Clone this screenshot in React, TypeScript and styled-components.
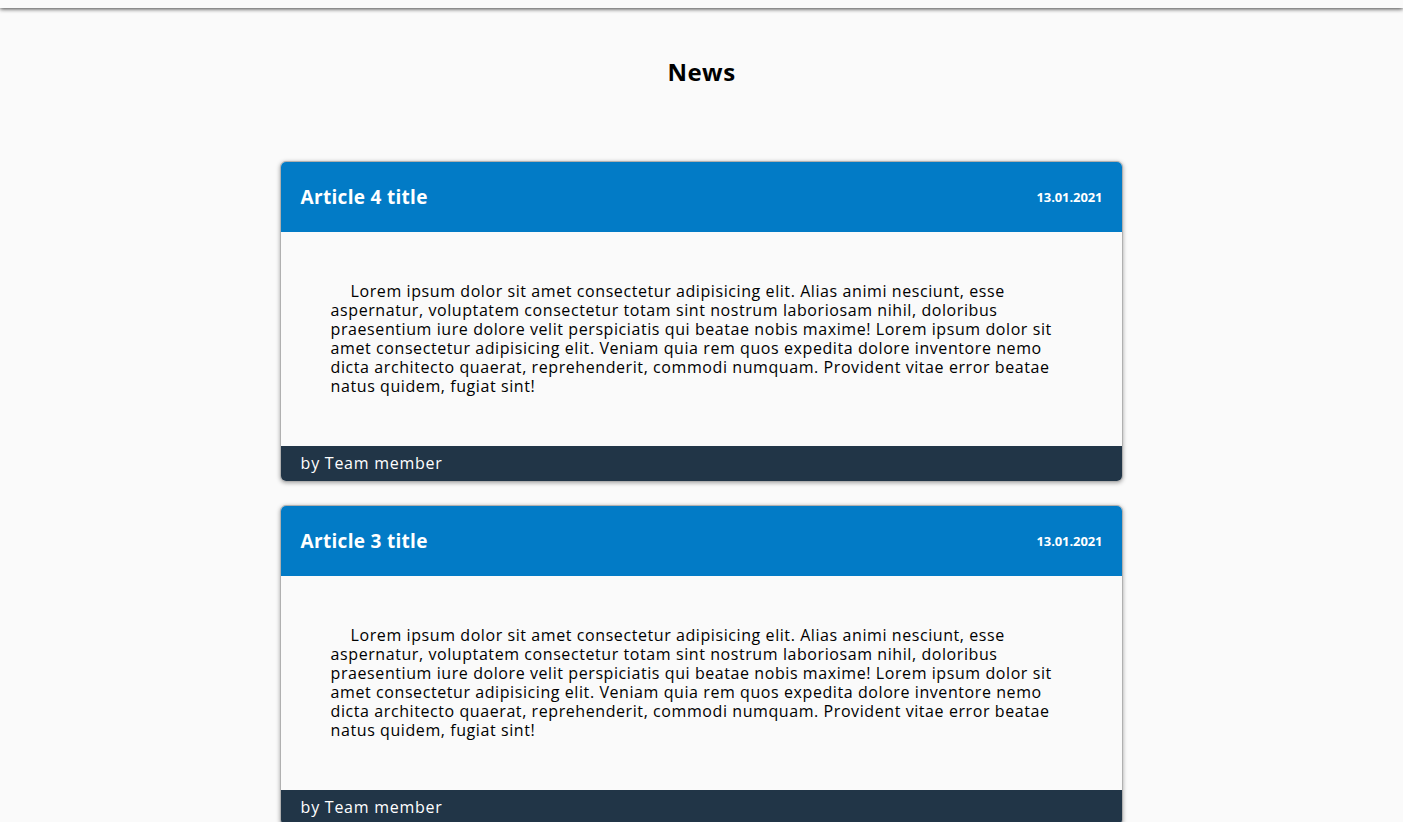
import React from "react";
import styled, { createGlobalStyle } from "styled-components";

const GlobalStyle = createGlobalStyle`
  html, body {
    margin: 0;
    padding: 0;
    background: #fafafa;
    font-family: "Open Sans", "Noto Sans", sans-serif;
    color: #000;
  }
`;

const TopBar = styled.header`
  height: 8px;
  background: #fafafa;
  box-shadow: 0 1px 4px rgba(0, 0, 0, 0.75);
`;

const Main = styled.main`
  display: flex;
  flex-direction: column;
  align-items: center;
  padding-bottom: 40px;
`;

const PageTitle = styled.h1`
  margin: 48px 0 0;
  height: 32px;
  line-height: 32px;
  font-size: 24px;
  font-weight: 700;
  letter-spacing: 0.5px;
  text-align: center;
`;

const List = styled.div`
  width: calc(60% + 2px);
  margin-top: 73px;
  display: flex;
  flex-direction: column;
  gap: 23px;
`;

const Card = styled.article`
  border: 1px solid #b0b0b0;
  border-radius: 6px;
  overflow: hidden;
  box-shadow: 0 1px 4px rgba(0, 0, 0, 0.35);
  background: #fafafa;
`;

const CardHeader = styled.div`
  box-sizing: border-box;
  height: 70px;
  background: #027bc6;
  color: #fff;
  display: flex;
  align-items: center;
  justify-content: space-between;
  padding: 0 20px;
`;

const CardTitle = styled.h2`
  margin: 0;
  font-size: 19px;
  font-weight: 700;
  letter-spacing: 0.3px;
`;

const CardDate = styled.span`
  font-size: 13px;
  font-weight: 700;
  letter-spacing: -0.1px;
`;

const CardBody = styled.div`
  padding: 50px;
  font-size: 16px;
  line-height: 19px;
  text-indent: 20px;
  letter-spacing: 0.58px;
`;

const CardFooter = styled.div`
  box-sizing: border-box;
  height: 35px;
  background: #213547;
  color: #fff;
  display: flex;
  align-items: center;
  padding: 0 20px 2px;
  font-size: 16px;
  letter-spacing: 0.75px;
`;

const lorem =
  "Lorem ipsum dolor sit amet consectetur adipisicing elit. Alias animi nesciunt, esse aspernatur, voluptatem consectetur totam sint nostrum laboriosam nihil, doloribus praesentium iure dolore velit perspiciatis qui beatae nobis maxime! Lorem ipsum dolor sit amet consectetur adipisicing elit. Veniam quia rem quos expedita dolore inventore nemo dicta architecto quaerat, reprehenderit, commodi numquam. Provident vitae error beatae natus quidem, fugiat sint!";

const articles = [
  { title: "Article 4 title", date: "13.01.2021", author: "Team member" },
  { title: "Article 3 title", date: "13.01.2021", author: "Team member" },
];

export default function App() {
  return (
    <>
      <GlobalStyle />
      <TopBar />
      <Main>
        <PageTitle>News</PageTitle>
        <List>
          {articles.map((a) => (
            <Card key={a.title}>
              <CardHeader>
                <CardTitle>{a.title}</CardTitle>
                <CardDate>{a.date}</CardDate>
              </CardHeader>
              <CardBody>{lorem}</CardBody>
              <CardFooter>by {a.author}</CardFooter>
            </Card>
          ))}
        </List>
      </Main>
    </>
  );
}
